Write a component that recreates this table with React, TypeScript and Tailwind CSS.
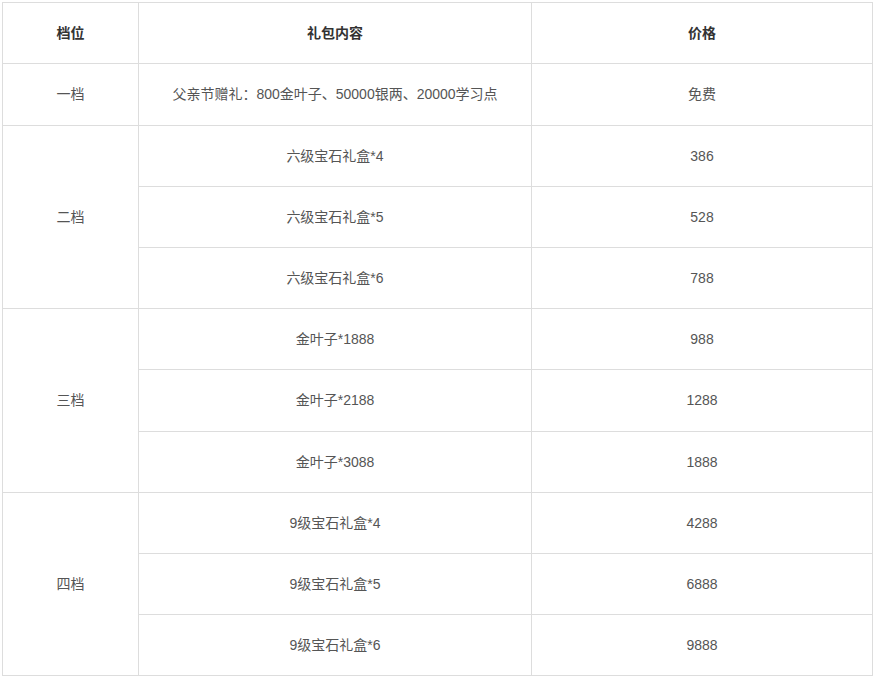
const rows: { tier?: string; span?: number; content: string; price: string; h: string }[] = [
  { tier: "一档", span: 1, content: "父亲节赠礼：800金叶子、50000银两、20000学习点", price: "免费", h: "h-[62px]" },
  { tier: "二档", span: 3, content: "六级宝石礼盒*4", price: "386", h: "h-[61px]" },
  { content: "六级宝石礼盒*5", price: "528", h: "h-[61px]" },
  { content: "六级宝石礼盒*6", price: "788", h: "h-[61px]" },
  { tier: "三档", span: 3, content: "金叶子*1888", price: "988", h: "h-[61px]" },
  { content: "金叶子*2188", price: "1288", h: "h-[62px]" },
  { content: "金叶子*3088", price: "1888", h: "h-[61px]" },
  { tier: "四档", span: 3, content: "9级宝石礼盒*4", price: "4288", h: "h-[61px]" },
  { content: "9级宝石礼盒*5", price: "6888", h: "h-[61px]" },
  { content: "9级宝石礼盒*6", price: "9888", h: "h-[61px]" },
]

const cell = "border border-[#dddddd] text-center align-middle p-0"

export default function App() {
  return (
    <div className="w-[876px] h-[680px] bg-white pt-[2px] pl-[2px]" style={{ fontFamily: '"Liberation Sans", "Noto Sans CJK SC", sans-serif' }}>
      <table className="table-fixed border-collapse w-[870px] text-[14px] text-[#555555]">
        <colgroup>
          <col className="w-[136px]" />
          <col className="w-[393px]" />
          <col className="w-[341px]" />
        </colgroup>
        <thead>
          <tr className="h-[61px]">
            <th className={`${cell} font-bold text-[#333333]`}>档位</th>
            <th className={`${cell} font-bold text-[#333333]`}>礼包内容</th>
            <th className={`${cell} font-bold text-[#333333]`}>价格</th>
          </tr>
        </thead>
        <tbody>
          {rows.map((row, i) => (
            <tr key={i} className={row.h}>
              {row.tier && (
                <td className={cell} rowSpan={row.span}>
                  {row.tier}
                </td>
              )}
              <td className={cell}>{row.content}</td>
              <td className={cell}>{row.price}</td>
            </tr>
          ))}
        </tbody>
      </table>
    </div>
  )
}
